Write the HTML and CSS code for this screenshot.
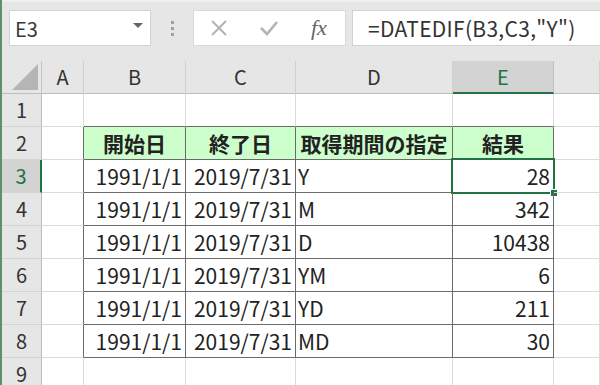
FILE: index.html
```html
<!DOCTYPE html>
<html lang="ja">
<head>
    <meta charset="UTF-8">
    <title>DATEDIF</title>
    <link rel="stylesheet" href="styles.css">
</head>
<body>
    <div class="window">
        <div class="toolbar">
            <div class="name-box">
                <span>E3</span>
                <span class="drop"></span>
            </div>
            <div class="grip">
                <i></i><i></i><i></i>
            </div>
            <div class="fx-buttons">
                <svg class="btn" width="20" height="20" viewBox="0 0 20 20">
                    <path d="M3 3 L17 17 M17 3 L3 17" stroke="#b3b3b3" stroke-width="2" fill="none"/>
                </svg>
                <svg class="btn" width="20" height="20" viewBox="0 0 20 20">
                    <path d="M2 10 L8 16 L18 4" stroke="#b3b3b3" stroke-width="2.6" fill="none"/>
                </svg>
                <span class="fx">fx</span>
            </div>
            <div class="formula">=DATEDIF(B3,C3,"Y")</div>
        </div>
        <div class="sheet" id="sheet"></div>
    </div>

    <script>
        const rows = [
            ['', '', '', '', ''],
            ['開始日', '終了日', '取得期間の指定', '結果', ''],
            ['1991/1/1', '2019/7/31', 'Y', '28', ''],
            ['1991/1/1', '2019/7/31', 'M', '342', ''],
            ['1991/1/1', '2019/7/31', 'D', '10438', ''],
            ['1991/1/1', '2019/7/31', 'YM', '6', ''],
            ['1991/1/1', '2019/7/31', 'YD', '211', ''],
            ['1991/1/1', '2019/7/31', 'MD', '30', ''],
            ['', '', '', '', '']
        ];
        const cols = ['A', 'B', 'C', 'D', 'E', ''];
        const sheet = document.getElementById('sheet');
        let html = '<div class="corner"><svg width="28" height="28" viewBox="0 0 28 28"><polygon points="27,1 27,27 1,27" fill="#b5b5b5"/></svg></div>';

        cols.forEach(function(c) {
            html += `<div class="col-head${c === 'E' ? ' active' : ''}">${c}</div>`;
        });

        rows.forEach(function(r, i) {
            const n = i + 1;
            const inTable = n >= 2 && n <= 8;
            html += `<div class="row-head${n === 3 ? ' active' : ''}">${n}</div>`;
            // column A
            html += `<div class="cell${inTable ? ' edge-right' : ''}"></div>`;
            r.forEach(function(v, j) {
                let cls = 'cell';
                if (n === 1 && j < 4) cls += ' edge-bottom';
                if (inTable && j < 4) {
                    cls += ' tbl';
                    if (n === 2) cls += ' th';
                    else if (j === 0 || j === 1 || j === 3) cls += ' num';
                    else cls += ' txt';
                }
                let inner = v;
                if (n === 3 && j === 3) inner += '<div class="selection"><span class="handle"></span></div>';
                html += `<div class="${cls}">${inner}</div>`;
            });
        });
        sheet.innerHTML = html;
    </script>
</body>
</html>
```

FILE: styles.css
```css
body {
    margin: 0;
    font-family: "Noto Sans CJK JP", "Noto Sans", sans-serif;
    background: #ffffff;
    color: #222;
    overflow: hidden;
}
.window {
    width: 598px;
    height: 385px;
    border-left: 2px solid #5f8f6f;
    overflow: hidden;
}
.toolbar {
    height: 61px;
    box-sizing: border-box;
    background: #e6e6e6;
    border-top: 2px solid #efefef;
    display: flex;
    align-items: flex-start;
    padding-top: 8px;
    padding-left: 7px;
}
.name-box {
    width: 142px;
    height: 36px;
    box-sizing: border-box;
    background: #fff;
    border: 1px solid #d2d2d2;
    display: flex;
    align-items: center;
    justify-content: space-between;
    padding: 0 7px 0 5px;
    font-size: 20px;
    color: #3a3a3a;
}
.drop {
    width: 0;
    height: 0;
    border-left: 5px solid transparent;
    border-right: 5px solid transparent;
    border-top: 5px solid #666;
    margin-bottom: 6px;
}
.grip {
    width: 42px;
    height: 36px;
    display: flex;
    flex-direction: column;
    align-items: center;
    justify-content: center;
    gap: 3px;
}
.grip i {
    width: 3px;
    height: 3px;
    background: #a0a0a0;
}
.fx-buttons {
    width: 153px;
    height: 36px;
    box-sizing: border-box;
    background: #fff;
    border: 1px solid #d9d9d9;
    display: flex;
    align-items: center;
    padding-left: 15px;
    gap: 30px;
}
.fx {
    font-family: "Liberation Serif", serif;
    font-style: italic;
    font-size: 22px;
    color: #666;
    margin-left: 2px;
}
.formula {
    flex: 1;
    height: 36px;
    box-sizing: border-box;
    margin-left: 6px;
    background: #fff;
    border: 1px solid #d2d2d2;
    border-right: none;
    padding-left: 15px;
    font-size: 21px;
    letter-spacing: 0.3px;
    line-height: 34px;
    color: #333;
    white-space: nowrap;
}
.sheet {
    display: grid;
    grid-template-columns: 40px 42px 102px 110px 157px 101px 1fr;
    grid-auto-rows: 33px;
    line-height: 1;
}
.sheet > div {
    box-sizing: border-box;
}
.corner {
    background: #e6e6e6;
    border-right: 1px solid #c6c6c6;
    border-bottom: 1px solid #bdbdbd;
    display: flex;
    align-items: flex-end;
    justify-content: flex-end;
    padding: 0 2px 2px 0;
}
.col-head {
    background: #e6e6e6;
    border-right: 1px solid #d0d0d0;
    border-bottom: 1px solid #bdbdbd;
    display: flex;
    align-items: center;
    justify-content: center;
    font-size: 20px;
    color: #333;
}
.col-head.active {
    background: #d3d3d3;
    color: #217346;
    border-bottom: 2px solid #217346;
    border-right-color: #c0c0c0;
}
.row-head {
    background: #e6e6e6;
    border-right: 1px solid #bdbdbd;
    border-bottom: 1px solid #d4d4d4;
    display: flex;
    align-items: center;
    justify-content: center;
    font-size: 20px;
    color: #333;
}
.row-head.active {
    background: #d3d3d3;
    color: #217346;
    border-right: 2px solid #217346;
}
.cell {
    border-right: 1px solid #dadada;
    border-bottom: 1px solid #dadada;
    display: flex;
    align-items: center;
    font-size: 21px;
    white-space: nowrap;
    position: relative;
}
.cell.edge-right {
    border-right-color: #6b6b6b;
}
.cell.edge-bottom {
    border-bottom-color: #6b6b6b;
}
.cell.tbl {
    border-right-color: #6b6b6b;
    border-bottom-color: #6b6b6b;
}
.cell.th {
    background: #ccffcc;
    justify-content: center;
    font-weight: bold;
}
.cell.num {
    justify-content: flex-end;
    padding-right: 3px;
}
.cell.txt {
    padding-left: 2px;
}
.selection {
    position: absolute;
    left: -2px;
    top: -2px;
    right: -2px;
    bottom: -2px;
    border: 2px solid #217346;
}
.handle {
    position: absolute;
    right: -5px;
    bottom: -5px;
    width: 6px;
    height: 6px;
    background: #217346;
    border: 1px solid #fff;
}
```
